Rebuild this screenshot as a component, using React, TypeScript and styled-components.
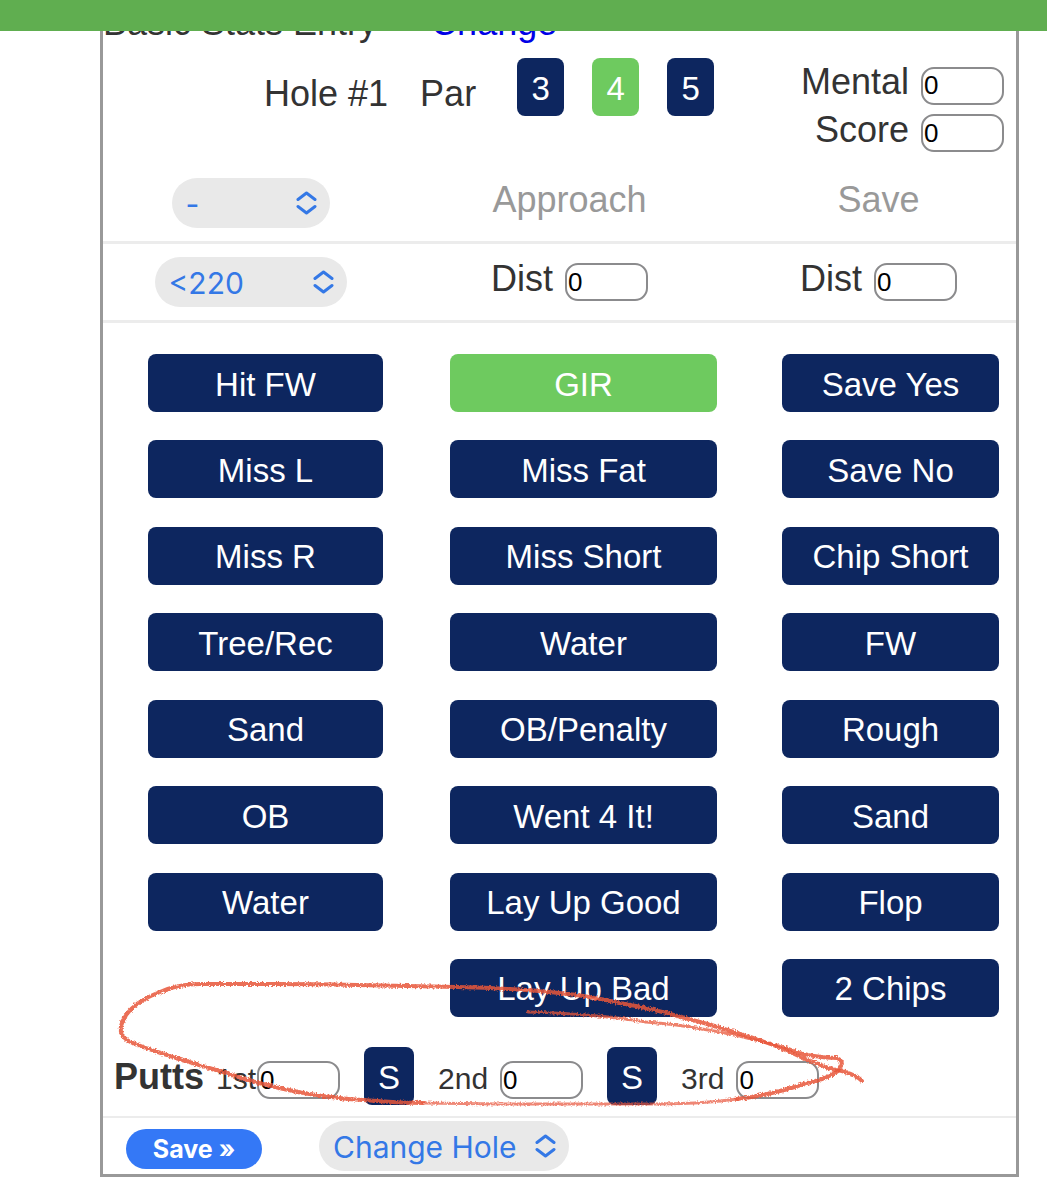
import React, { useState } from "react";
import styled, { createGlobalStyle } from "styled-components";

const GlobalStyle = createGlobalStyle`
  *, *::before, *::after { box-sizing: border-box; }
  body {
    margin: 0;
    background: #fff;
    color: #333;
    font-family: "Helvetica Neue", "Liberation Sans", Arial, sans-serif;
    font-size: 36px;
  }
`;

const navy = "#0d265f";
const green = "#6eca5f";
const line = "#ececec";

const TopBar = styled.header`
  position: fixed;
  top: 0;
  left: 0;
  right: 0;
  z-index: 2;
  height: 31px;
  background: #60ae50;
`;

const Panel = styled.main`
  margin: 0 28px 0 100px;
  border: solid #999;
  border-width: 0 3px 3px;
`;

const TitleRow = styled.div`
  display: flex;
  gap: 54px;
  line-height: 46px;
`;

const Title = styled.h1`
  margin: 0;
  font-size: 36px;
  font-weight: 400;
`;

const ChangeLink = styled.a`
  color: #0000e6;
  text-decoration: none;
`;

const HoleRow = styled.section`
  display: flex;
  align-items: flex-start;
  padding: 12px 12px 13px 161px;
`;

const HoleText = styled.span`
  margin-right: 32px;
  line-height: 72px;
`;

const ParGroup = styled.div`
  display: flex;
  gap: 28px;
  margin-left: 9px;
`;

const ScoreGroup = styled.div`
  display: flex;
  flex-direction: column;
  align-items: flex-end;
  gap: 9px;
  margin-left: auto;
  padding-top: 8px;
`;

const Field = styled.label<{ $gap?: number; $small?: boolean }>`
  display: inline-flex;
  align-items: baseline;
  gap: ${(p) => p.$gap ?? 12}px;
  font-size: ${(p) => (p.$small ? 30 : 36)}px;
  line-height: 32px;
`;

const NumberBox = styled.input`
  width: 83px;
  height: 38px;
  padding: 0 0 0 1px;
  border: 2px solid #8b8b8d;
  border-radius: 13px;
  background: #fff;
  color: #000;
  font: 26px "Liberation Sans", Arial, sans-serif;
`;

const Choice = styled.button<{ $on?: boolean; $width?: number }>`
  width: ${(p) => (p.$width ? `${p.$width}px` : "100%")};
  height: 58px;
  padding: 3px 0 0;
  border: 0;
  border-radius: 8px;
  background: ${(p) => (p.$on ? green : navy)};
  color: #fff;
  font: 33px "Helvetica Neue", "Liberation Sans", Arial, sans-serif;
  cursor: pointer;
`;

const Columns = styled.div`
  display: grid;
  grid-template-columns: 295fr 343fr 275fr;
`;

const HeadRow = styled(Columns)`
  min-height: 79px;
  align-items: center;
  justify-items: center;
  border-bottom: 3px solid ${line};
`;

const ColumnTitle = styled.h2`
  margin: 0;
  padding-bottom: 6px;
  color: #999;
  font-size: 36px;
  font-weight: 400;
  line-height: 40px;
`;

const ShotGrid = styled(Columns)`
  min-height: 724px;
  padding: 31px 0 30px;
  align-content: space-between;
`;

const Cell = styled.div<{ $col: number }>`
  grid-column: ${(p) => p.$col + 1};
  padding: ${(p) => ["0 15px 0 45px", "0 24px 0 52px", "0 17px 0 41px"][p.$col]};
`;

const SelectWrap = styled.span<{ $width: number }>`
  position: relative;
  display: inline-flex;
  width: ${(p) => p.$width}px;
`;

const SelectBox = styled.select`
  width: 100%;
  height: 50px;
  padding: 2px 44px 0 14px;
  appearance: none;
  border: 0;
  border-radius: 25px;
  background: #e9e9e9;
  color: #3478e6;
  font: 30px Inter, sans-serif;
  cursor: pointer;
`;

const Arrows = styled.svg`
  position: absolute;
  right: 13px;
  top: 13px;
  width: 21px;
  height: 24px;
  pointer-events: none;
`;

const PuttsRow = styled.section`
  position: relative;
  display: flex;
  align-items: baseline;
  padding: 0 0 11px 11px;
  border-bottom: 2px solid ${line};
`;

const PuttsTitle = styled.strong`
  margin-right: 12px;
  line-height: 40px;
`;

const PuttGroup = styled.div`
  display: flex;
  align-items: baseline;
  gap: 24px;
`;

const Scribble = styled.svg`
  position: absolute;
  left: 0;
  top: -77px;
  width: 913px;
  height: 150px;
  pointer-events: none;
`;

const Footer = styled.footer`
  display: flex;
  align-items: baseline;
  gap: 57px;
  padding: 3px 0 3px 23px;
`;

const SaveButton = styled.button`
  width: 136px;
  height: 40px;
  padding: 0;
  border: 0;
  border-radius: 20px;
  background: #3478f6;
  color: #fff;
  font: 700 25px Inter, sans-serif;
  cursor: pointer;
`;

function NumberField({ label, gap, small }: { label: string; gap?: number; small?: boolean }) {
  return (
    <Field $gap={gap} $small={small}>
      {label}
      <NumberBox type="text" inputMode="numeric" defaultValue="0" />
    </Field>
  );
}

function Picker({ name, width, options }: { name: string; width: number; options: string[] }) {
  return (
    <SelectWrap $width={width}>
      <SelectBox aria-label={name}>
        {options.map((o) => (
          <option key={o}>{o}</option>
        ))}
      </SelectBox>
      <Arrows viewBox="0 0 21 24" fill="none" stroke="#3478e6" strokeWidth="3" strokeLinecap="round" strokeLinejoin="round" aria-hidden="true">
        <path d="M2 8.500 10.500 2 19 8.500M2 15.500l8.500 6.500 8.500-6.500" />
      </Arrows>
    </SelectWrap>
  );
}

const shots = [
  ["Hit FW", "Miss L", "Miss R", "Tree/Rec", "Sand", "OB", "Water"],
  ["GIR", "Miss Fat", "Miss Short", "Water", "OB/Penalty", "Went 4 It!", "Lay Up Good", "Lay Up Bad"],
  ["Save Yes", "Save No", "Chip Short", "FW", "Rough", "Sand", "Flop", "2 Chips"],
];

const rows = Array.from({ length: 8 }, (_, r) => r);

export default function App() {
  const [par, setPar] = useState(4);
  const [picked, setPicked] = useState<Record<number, string>>({ 1: "GIR" });

  return (
    <>
      <GlobalStyle />
      <TopBar />
      <Panel>
        <TitleRow>
          <Title>Basic Stats Entry</Title>
          <ChangeLink href="#change">Change</ChangeLink>
        </TitleRow>

        <HoleRow>
          <HoleText>Hole #1</HoleText>
          <HoleText>Par</HoleText>
          <ParGroup>
            {[3, 4, 5].map((n) => (
              <Choice key={n} type="button" $width={47} $on={par === n} onClick={() => setPar(n)}>
                {n}
              </Choice>
            ))}
          </ParGroup>
          <ScoreGroup>
            <NumberField label="Mental" />
            <NumberField label="Score" />
          </ScoreGroup>
        </HoleRow>

        <HeadRow>
          <Picker name="Club" width={158} options={["-", "Driver", "Wood", "Iron"]} />
          <ColumnTitle>Approach</ColumnTitle>
          <ColumnTitle>Save</ColumnTitle>
        </HeadRow>
        <HeadRow>
          <Picker name="Drive distance" width={192} options={["<220", "220-250", "250+"]} />
          <NumberField label="Dist" />
          <NumberField label="Dist" />
        </HeadRow>

        <ShotGrid>
          {rows.flatMap((r) =>
            shots.map((column, c) =>
              column[r] ? (
                <Cell key={`${r}-${c}`} $col={c}>
                  <Choice
                    type="button"
                    $on={picked[c] === column[r]}
                    onClick={() => setPicked({ ...picked, [c]: column[r] })}
                  >
                    {column[r]}
                  </Choice>
                </Cell>
              ) : null
            )
          )}
        </ShotGrid>

        <PuttsRow>
          <PuttsTitle>Putts</PuttsTitle>
          <PuttGroup>
            <NumberField label="1st" gap={1} small />
            <Choice type="button" $width={50}>S</Choice>
            <NumberField label="2nd" small />
            <Choice type="button" $width={50}>S</Choice>
            <NumberField label="3rd" small />
          </PuttGroup>
          <Scribble viewBox="103 970 913 150" aria-hidden="true">
            <defs>
              <filter id="crayon" filterUnits="userSpaceOnUse" x="103" y="970" width="913" height="150">
                <feTurbulence type="fractalNoise" baseFrequency="0.6" numOctaves="2" seed="4" result="noise" />
                <feDisplacementMap in="SourceGraphic" in2="noise" scale="4" xChannelSelector="R" yChannelSelector="G" />
              </filter>
            </defs>
            <g filter="url(#crayon)" fill="none" stroke="#e8563a" strokeLinecap="round" strokeLinejoin="round">
              <path
                strokeWidth="4"
                strokeOpacity="0.85"
                d="M862 1081Q858 1076 842 1071Q831 1070 821 1065Q806 1060 790 1052Q765 1041 737 1033Q710 1024 681 1017Q650 1008 619 1003Q590 996 559 993Q510 988 457 987Q400 986 357 985Q310 984 273 984H200Q178 984 160 992Q147 997 137 1004Q124 1014 121 1026Q119 1038 133 1043Q155 1052 183 1060Q205 1067 223 1072Q243 1079 263 1084Q293 1092 323 1096Q350 1100 377 1101Q400 1103 423 1103"
              />
              <path
                strokeWidth="3"
                strokeOpacity="0.75"
                d="M528 1012Q565 1013 598 1016Q622 1018 646 1022Q675 1024 702 1029Q728 1033 751 1039Q770 1043 786 1048"
              />
              <path
                strokeWidth="4"
                strokeOpacity="0.85"
                d="M786 1048Q800 1054 814 1056Q826 1058 837 1058Q844 1061 841 1066Q838 1073 831 1075Q820 1081 807 1083Q790 1089 772 1093Q755 1097 737 1099"
              />
              <path strokeWidth="3" strokeOpacity="0.7" d="M737 1099Q716 1102 695 1103Q674 1104 653 1104H500L423 1103" />
            </g>
          </Scribble>
        </PuttsRow>

        <Footer>
          <SaveButton type="button">Save »</SaveButton>
          <Picker name="Change hole" width={250} options={["Change Hole", "Hole 1", "Hole 2", "Hole 3"]} />
        </Footer>
      </Panel>
    </>
  );
}
